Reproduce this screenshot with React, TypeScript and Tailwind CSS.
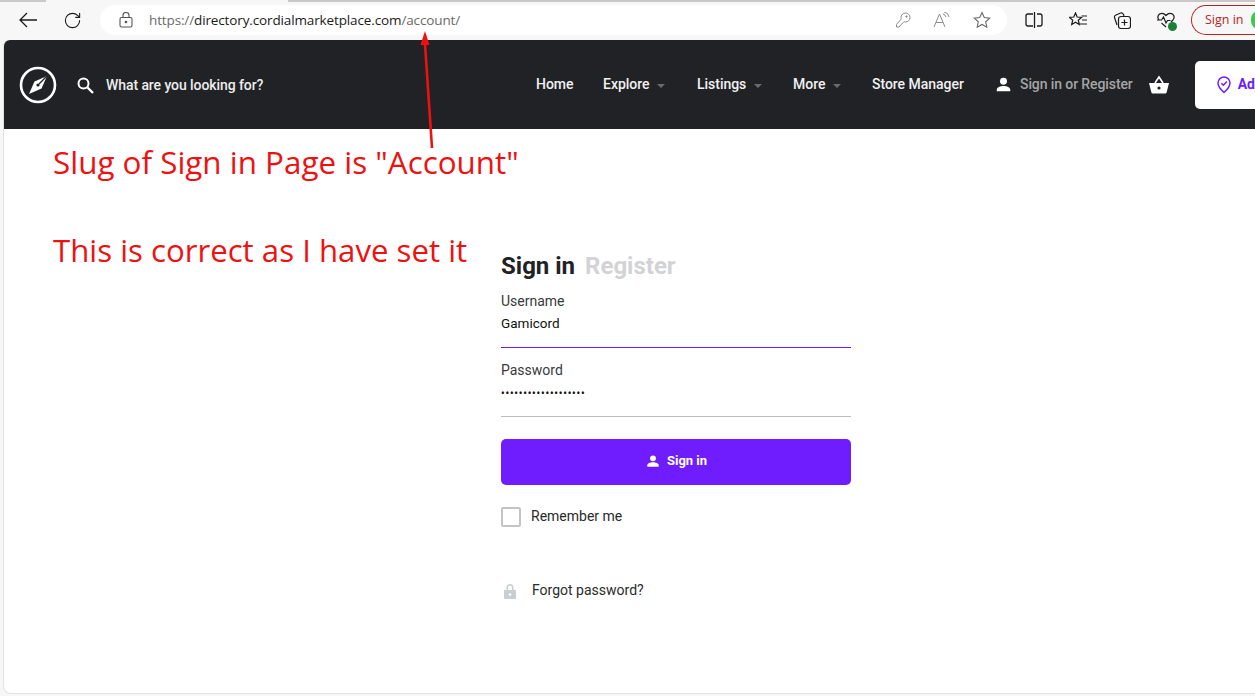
import { RotateCw } from "lucide-react";

const UserIcon = ({ size = 18 }: { size?: number }) => (
  <svg width={size} height={size} viewBox="0 0 24 24" fill="currentColor">
    <circle cx="12" cy="8" r="4.4" />
    <path d="M12 14c-4.2 0-8.5 2-8.5 4.4v2.1h17v-2.1C20.500 16 16.200 14 12 14z" />
  </svg>
);

const Caret = () => <span className="ml-[8px] mt-[2px] w-0 h-0 border-x-[4.5px] border-x-transparent border-t-[4.5px] border-t-[#6a6b6f]" />;

const NavItem = ({ label, caret, w }: { label: string; caret?: boolean; w: string }) => (
  <div className={`flex items-center text-[14px] font-medium tracking-[-0.03px] text-[#f1f1f1] ${w}`}>
    {label}
    {caret && <Caret />}
  </div>
);

function BrowserBar() {
  return (
    <div className="relative h-[40px] bg-[#f7f7f7] flex items-center pl-[18px] shrink-0">
      <div className="absolute top-0 left-0 right-0 h-[2px] flex">
        <div className="w-[46px] bg-[#c9c9c9]" />
        <div className="w-[242px] bg-[#f7f7f7]" />
        <div className="flex-1 bg-[#c9c9c9]" />
      </div>
      <svg width="20" height="18" viewBox="0 0 20 18" fill="none" stroke="#1c1c1c" strokeWidth="1.3">
        <path d="M19 9H2M9 2 L2 9 L9 16" />
      </svg>
      <RotateCw size={19} strokeWidth={1.4} className="ml-[25px] text-[#1c1c1c]" />
      <div className="ml-[18px] h-[30px] w-[907px] rounded-full bg-white flex items-center pl-[19px] pr-[16px]">
        <svg width="14" height="16" viewBox="0 0 14 16" fill="none" stroke="#555" strokeWidth="1.1">
          <rect x="1" y="5.500" width="12" height="9.500" rx="1.500" />
          <path d="M4 5.500V3.500a3 3 0 0 1 6 0v2" />
          <circle cx="7" cy="10" r="0.8" fill="#555" />
        </svg>
        <div className="ml-[16px] text-[13.5px] leading-[30px] text-[#6b6b6b] font-['Open_Sans',sans-serif] tracking-[-0.13px]">
          https://<span className="text-[#1b1b1b]">directory.cordialmarketplace.com</span>/account/
        </div>
        <div className="ml-auto flex items-center gap-[22px] text-[#8c8c8c]">
          <svg width="16" height="16" viewBox="0 0 16 16" fill="none" stroke="currentColor" strokeWidth="1">
            <path d="M10.500 1a4.500 4.500 0 0 1 0 9q-.9 0-1.500-.3L4 15H1.500v-2.500L6.300 7q-.3-.8-.3-1.500A4.500 4.500 0 0 1 10.500 1z" />
            <circle cx="11.500" cy="4.500" r="0.700" fill="currentColor" />
          </svg>
          <svg width="18" height="16" viewBox="0 0 18 16" fill="none" stroke="currentColor" strokeWidth="1">
            <path d="M1 15 L6.500 2 L12 15M3 10.500h7" />
            <path d="M10 2q2.500.5 3 3M11 0q4.500.5 5 5" />
          </svg>
          <svg width="18" height="18" viewBox="0 0 18 18" fill="none" stroke="#6a6a6a" strokeWidth="1.100">
            <path d="M9 1.500l2.300 5 5.400.6-4 3.700 1.100 5.400L9 13.500l-4.800 2.700 1.100-5.400-4-3.700 5.400-.6z" />
          </svg>
        </div>
      </div>
      <div className="ml-[18px] flex items-center gap-[26px] text-[#1c1c1c]">
        <svg width="18" height="16" viewBox="0 0 18 16" fill="none" stroke="currentColor" strokeWidth="1.300">
          <path d="M8 2H3a2 2 0 0 0-2 2v8a2 2 0 0 0 2 2h5M12 2h3a2 2 0 0 1 2 2v8a2 2 0 0 1-2 2h-3M9.500 0v16" />
        </svg>
        <svg width="18" height="16" viewBox="0 0 18 16" fill="none" stroke="currentColor" strokeWidth="1.200">
          <path d="M6.500 1l1.700 4 4.300.4-3.200 2.800 1 4.300-3.800-2.300-3.800 2.300 1-4.300L.5 5.400 4.800 5z" />
          <path d="M12.500 4H18M13 8h5M10.500 12H18" />
        </svg>
        <svg width="18" height="18" viewBox="0 0 18 18" fill="none" stroke="currentColor" strokeWidth="1.200">
          <path d="M4 14 L1.500 6.500 Q1 5 2.500 4.300 L7.500 2 Q9.500 1.400 10.500 3.500 L11 5" />
          <rect x="5.500" y="5.500" width="12" height="12" rx="2.500" />
          <path d="M11.500 8.500v6M8.500 11.500h6" />
        </svg>
        <div className="relative">
          <svg width="18" height="16" viewBox="0 0 18 16" fill="none" stroke="currentColor" strokeWidth="1.200">
            <path d="M2 8 Q-.5 4.500 2.500 2 Q6 0 9 3.500 Q12 0 15.500 2 Q18.500 4.500 16 8 L14 10" />
            <path d="M0 8h4.500l2-3 2.500 6 1.500-2.500h3" />
            <path d="M4.500 11L9 15" />
          </svg>
          <span className="absolute right-[-2px] bottom-[-3px] w-[9px] h-[9px] rounded-full bg-[#1a7f37]" />
        </div>
      </div>
      <div className="ml-[16px] h-[30px] flex-1 min-w-0 rounded-l-full border border-r-0 border-[#b3261e] flex items-center pl-[13px] overflow-hidden">
        <span className="text-[12.500px] whitespace-nowrap text-[#b3261e] font-['Open_Sans',sans-serif]">Sign in</span>
        <span className="ml-[7px] w-[16px] h-[18px] rounded-full bg-[#3fc84a] shrink-0" />
      </div>
    </div>
  );
}

function Header() {
  return (
    <div className="h-[89px] bg-[#212226] rounded-tl-[6px] flex items-center pl-[15px] overflow-hidden shrink-0">
      <svg width="38" height="38" viewBox="0 0 38 38" fill="none" className="shrink-0">
        <circle cx="19" cy="19" r="17" stroke="white" strokeWidth="2.600" />
        <path d="M28 10 L22.500 22.500 L10 28 L15.500 15.500 Z" fill="white" />
        <path d="M28 10 L20 18" stroke="#212226" strokeWidth="1.200" />
        <circle cx="19" cy="19" r="1.600" fill="#212226" />
      </svg>
      <svg width="17" height="17" viewBox="0 0 17 17" fill="none" stroke="white" className="ml-[20px] shrink-0 mt-[2px]">
        <circle cx="6.500" cy="6.500" r="5" strokeWidth="2" />
        <path d="M10.500 10.500 L16 16" strokeWidth="2.400" />
      </svg>
      <div className="ml-[12px] mt-[1px] w-[430px] shrink-0 text-[14px] font-medium tracking-[-0.08px] text-[#ededed]">What are you looking for?</div>
      <NavItem label="Home" w="w-[67px]" />
      <NavItem label="Explore" caret w="w-[94px]" />
      <NavItem label="Listings" caret w="w-[96px]" />
      <NavItem label="More" caret w="w-[79px]" />
      <NavItem label="Store Manager" w="w-[122px] shrink-0 whitespace-nowrap" />
      <div className="flex items-center shrink-0 text-[14px] font-medium tracking-[-0.1px] text-[#a5a5a7] whitespace-nowrap">
        <span className="text-white mr-[7px]"><UserIcon size={19} /></span>
        Sign in or Register
      </div>
      <svg width="22" height="20" viewBox="0 0 22 20" fill="white" className="ml-[15px] shrink-0">
        <path d="M7 8 L11 2 L15 8" fill="none" stroke="white" strokeWidth="1.600" />
        <path d="M1 8h20l-2.400 9.500q-.3 1-1.400 1H4.800q-1.100 0-1.400-1z" />
        <circle cx="11" cy="13" r="1.600" fill="#212226" />
      </svg>
      <div className="ml-[25px] h-[48px] flex-1 min-w-0 bg-white rounded-l-[5px] flex items-center pl-[22px] overflow-hidden">
        <svg width="14" height="18" viewBox="0 0 14 18" fill="none" stroke="#6f1cff" strokeWidth="1.500" className="shrink-0">
          <path d="M7 16.500 C3 13 1 10 1 7 a6 6 0 0 1 12 0 c0 3-2 6-6 9.500z" />
          <path d="M4.300 7.200 L6.400 9.200 L9.800 5.600" />
        </svg>
        <span className="ml-[7px] text-[14px] font-bold text-[#6f1cff] whitespace-nowrap">Ad</span>
      </div>
    </div>
  );
}

function SignInForm() {
  return (
    <div className="ml-[497px] w-[350px] pt-[121px] text-[14px] text-[#3a3a3c]">
      <div className="flex gap-[10px] text-[24px] leading-[32px] font-bold">
        <span className="text-[#212226]">Sign in</span>
        <span className="text-[#d3d3d6]">Register</span>
      </div>
      <div className="mt-[9px] leading-[20px]">Username</div>
      <div className="mt-[2px] leading-[20px] text-[13.500px] text-[#111]">Gamicord</div>
      <div className="mt-[14px] h-px bg-[#6f1cff]" />
      <div className="mt-[12px] leading-[20px]">Password</div>
      <div className="mt-[4px] leading-[20px] text-[10px] font-bold text-[#111] tracking-[0.85px]">•••••••••••••••••••</div>
      <div className="mt-[12px] h-px bg-[#bcbcc4]" />
      <div className="mt-[22px] h-[46px] pb-[2px] rounded-[5px] bg-[#6f1cff] flex items-center justify-center gap-[6px] text-white text-[13px] font-bold">
        <UserIcon size={16} />
        Sign in
      </div>
      <div className="mt-[21px] flex items-center gap-[10px]">
        <span className="w-[20px] h-[20px] rounded-[2px] border-2 border-[#c4c4c4]" />
        <span className="text-[#2a2a2c]">Remember me</span>
      </div>
      <div className="mt-[53px] flex items-center gap-[15px] pl-[2px]">
        <svg width="14" height="16" viewBox="0 0 14 16" fill="#c9ced2">
          <path d="M3.500 7V4.500a3.500 3.500 0 0 1 7 0V7H9V4.500a2 2 0 0 0-4 0V7z" />
          <path d="M1 7h12v8a1 1 0 0 1-1 1H2a1 1 0 0 1-1-1z" />
          <circle cx="7" cy="11.500" r="1.300" fill="white" />
        </svg>
        <span className="text-[#2a2a2c]">Forgot password?</span>
      </div>
    </div>
  );
}

export default function App() {
  return (
    <div className="relative w-[1255px] h-[696px] overflow-hidden bg-[#f7f7f7] font-['Roboto',sans-serif] flex flex-col">
      <BrowserBar />
      <div className="flex-1 ml-[3px] mb-[2px] bg-white rounded-tl-[6px] rounded-bl-[8px] flex flex-col border-l border-b border-[#e2e2e2]">
        <Header />
        <SignInForm />
      </div>

      {/* red annotations on top of the shot */}
      <div className="absolute left-[53px] top-[140px] text-[31.400px] leading-[44px] text-[#ee1111] font-['Open_Sans',sans-serif] whitespace-nowrap">Slug of Sign in Page is "Account"</div>
      <div className="absolute left-[53px] top-[228px] text-[31.200px] leading-[44px] text-[#ee1111] font-['Open_Sans',sans-serif] whitespace-nowrap">This is correct as I have set it</div>
      <svg className="absolute left-[410px] top-[28px]" width="30" height="124" viewBox="0 0 30 124" fill="none">
        <path d="M22 120 L15 16" stroke="#ee1111" strokeWidth="2.600" />
        <path d="M15 3 L19.500 17 L10.500 17 Z" fill="#ee1111" />
      </svg>
    </div>
  );
}
